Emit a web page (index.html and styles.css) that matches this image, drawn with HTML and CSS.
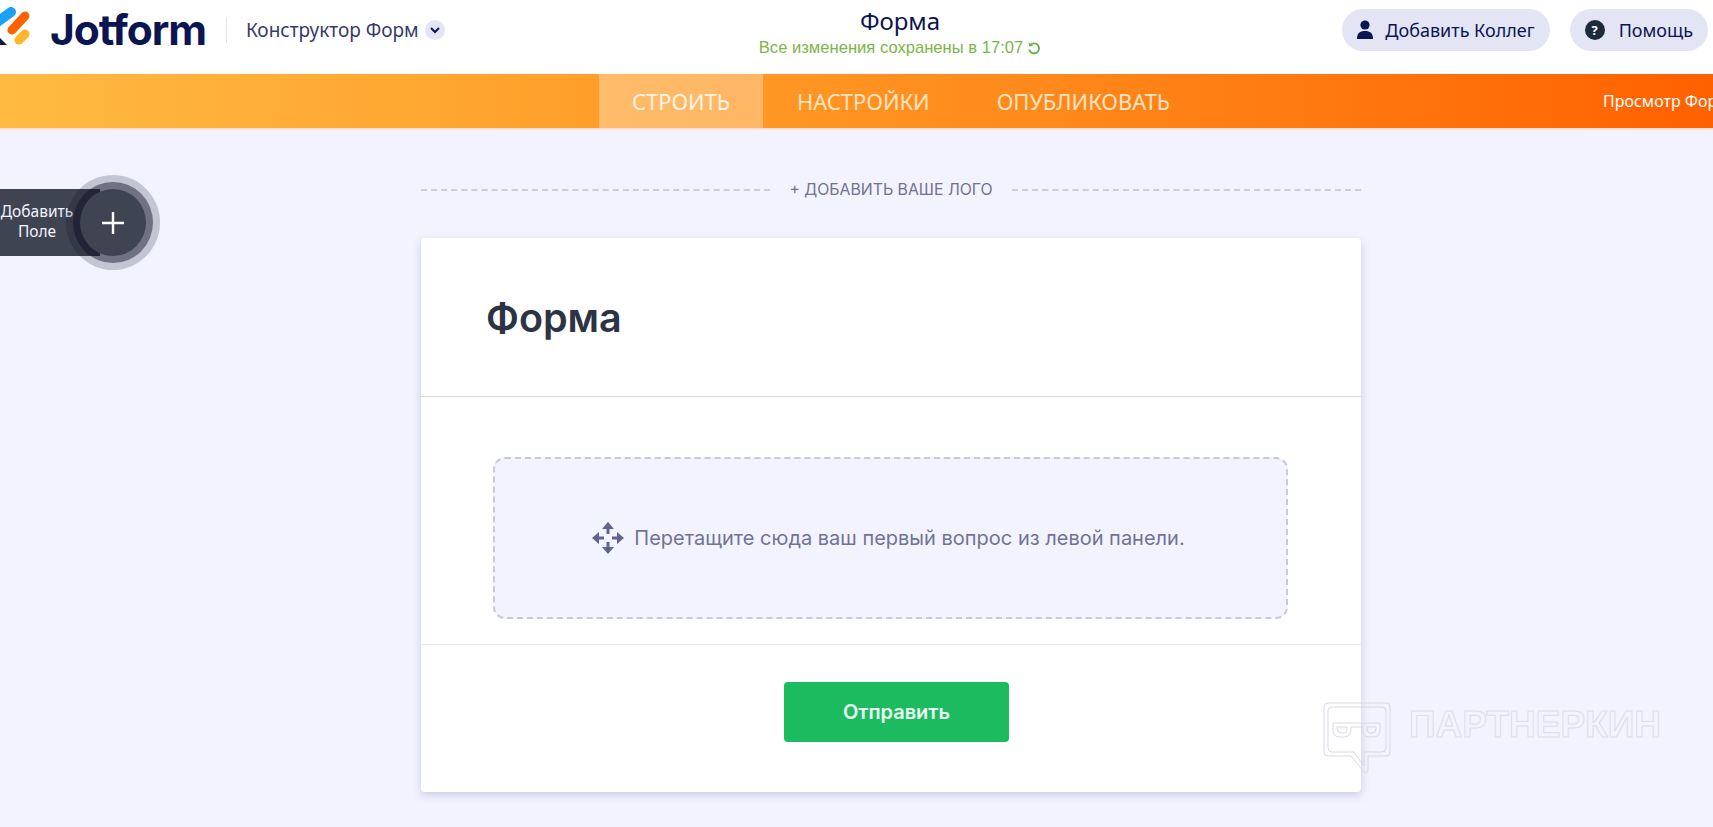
FILE: index.html
```html
<!DOCTYPE html>
<html lang="ru">
<head>
    <meta charset="UTF-8">
    <title>Форма</title>
    <link rel="stylesheet" href="styles.css">
</head>
<body>
    <header class="topbar">
        <div class="brand">
            <svg class="brand-icon" width="50" height="50" viewBox="0 5 50 50">
                <path d="M-4 23 L11 12" stroke="#1aa3f5" stroke-width="10" stroke-linecap="round"/>
                <path d="M12 30 L25 16" stroke="#ff6100" stroke-width="9" stroke-linecap="round"/>
                <path d="M19 40 L25 34" stroke="#ffb629" stroke-width="9" stroke-linecap="round"/>
                <path d="M-1 37 L7 45 L-1 45 Z" fill="#0a1551"/>
            </svg>
            <span class="brand-name">Jotform</span>
            <span class="brand-sep"></span>
            <span class="brand-sub">Конструктор Форм</span>
            <span class="brand-caret">
                <svg width="12" height="12" viewBox="0 0 12 12"><path d="M2 4 L6 8 L10 4" fill="none" stroke="#0a1551" stroke-width="2"/></svg>
            </span>
        </div>
        <div class="doc-title">
            <div class="doc-name">Форма</div>
            <div class="doc-saved">Все изменения сохранены в 17:07
                <svg width="14" height="14" viewBox="0 0 14 14"><path d="M3 4.5 A5 5 0 1 1 2.2 8.5" fill="none" stroke="#64b247" stroke-width="1.8"/><path d="M1.6 1.4 L2.2 5.6 L6.3 4.8 Z" fill="#64b247"/></svg>
            </div>
        </div>
        <div class="top-actions">
            <button class="pill">
                <svg width="18" height="20" viewBox="0 0 18 20"><circle cx="9" cy="5" r="4.6" fill="#0a1551"/><path d="M1 19 C1 13 4 11 9 11 C14 11 17 13 17 19 Z" fill="#0a1551"/></svg>
                Добавить Коллег
            </button>
            <button class="pill pill-help">
                <span class="help-icon">?</span>
                Помощь
            </button>
        </div>
    </header>

    <nav class="navbar">
        <a class="tab tab-active">СТРОИТЬ</a>
        <a class="tab tab-settings">НАСТРОЙКИ</a>
        <a class="tab tab-publish">ОПУБЛИКОВАТЬ</a>
        <span class="preview">Просмотр Формы</span>
    </nav>

    <main class="stage">
        <div class="add-field">
            <div class="add-label">Добавить<br>Поле</div>
            <div class="add-btn">
                <svg width="24" height="24" viewBox="0 0 24 24"><path d="M12 1 V23 M1 12 H23" stroke="#fff" stroke-width="2.4"/></svg>
            </div>
        </div>

        <div class="logo-row">
            <span class="logo-line"></span>
            <span class="logo-text">+ ДОБАВИТЬ ВАШЕ ЛОГО</span>
            <span class="logo-line"></span>
        </div>

        <section class="card">
            <div class="card-head">
                <h1>Форма</h1>
            </div>
            <div class="card-body">
                <div class="dropzone">
                    <svg width="32" height="32" viewBox="0 0 32 32" fill="#5f648c">
                        <path d="M16 0 L22 7 H10 Z"/>
                        <path d="M16 32 L22 25 H10 Z"/>
                        <path d="M0 16 L7 10 V22 Z"/>
                        <path d="M32 16 L25 10 V22 Z"/>
                        <path d="M14.5 6 H17.5 V12 H14.5 Z M14.5 20 H17.5 V26 H14.5 Z M6 14.5 H12 V17.5 H6 Z M20 14.5 H26 V17.5 H20 Z"/>
                    </svg>
                    <span>Перетащите сюда ваш первый вопрос из левой панели.</span>
                </div>
            </div>
            <div class="card-foot">
                <button class="submit">Отправить</button>
            </div>
        </section>
    </main>

    <div class="watermark">
        <svg width="68" height="74" viewBox="0 0 68 74" fill="none" stroke="#d6d6e2" stroke-width="1">
            <path d="M5 1 H63 Q67 1 67 5 V50 Q67 54 63 54 H45 V68 Q44 73 41 70 L28 54 H5 Q1 54 1 50 V5 Q1 1 5 1 Z"/>
            <path d="M9 5 H59 Q63 5 63 9 V46 Q63 50 59 50 H41 V64 L31 50 H9 Q5 50 5 46 V9 Q5 5 9 5 Z"/>
            <path d="M10 21 H57 V28 Q57 35 50 35 H46 Q40 35 40 28 V25 H28 V28 Q28 35 21 35 H17 Q10 35 10 28 Z"/>
            <path d="M14 25 H24 V27 Q24 31 20 31 H18 Q14 31 14 27 Z M44 25 H53 V27 Q53 31 49 31 H47 Q44 31 44 27 Z"/>
        </svg>
        <span class="watermark-text">ПАРТНЕРКИН</span>
    </div>
</body>
</html>
```

FILE: styles.css
```css
*{
    box-sizing: border-box;
}

html,
body{
    margin: 0;
    height: 827px;
    overflow: hidden;
}

body{
    position: relative;
    background-color: #f3f3ff;
    font-family: "Inter", "Liberation Sans", sans-serif;
    color: #0a1551;
}

/* top bar */
.topbar{
    display: flex;
    align-items: center;
    height: 74px;
    padding-bottom: 14px;
    background-color: #fff;
}

.brand{
    display: flex;
    align-items: center;
    flex: 0 0 740px;
    height: 50px;
}
.brand-icon{
    flex: none;
}
.brand-name{
    margin-top: -2px;
    font-size: 42.5px;
    font-weight: 700;
    letter-spacing: -1.1px;
}
.brand-sep{
    width: 1px;
    height: 26px;
    margin: 0 19px 0 20px;
    background-color: #e3e5f0;
}
.brand-sub{
    font-family: "Noto Sans", sans-serif;
    font-size: 19px;
    color: #343c6a;
}
.brand-caret{
    display: flex;
    align-items: center;
    justify-content: center;
    width: 20px;
    height: 20px;
    margin-left: 6px;
    border-radius: 50%;
    background-color: #e3e5f5;
}

.doc-title{
    flex: 0 0 320px;
    margin-top: 2px;
    text-align: center;
}
.doc-name{
    font-family: "Noto Sans", sans-serif;
    font-size: 24px;
    line-height: 32px;
}
.doc-saved{
    display: flex;
    align-items: center;
    justify-content: center;
    gap: 4px;
    margin-top: 1px;
    font-family: "Liberation Sans", sans-serif;
    font-size: 16.6px;
    line-height: 20px;
    color: #7ab648;
}

.top-actions{
    display: flex;
    gap: 20px;
    margin-left: auto;
    padding-right: 5px;
}
.pill{
    display: flex;
    align-items: center;
    gap: 11px;
    height: 42px;
    padding: 0 15px 0 14px;
    border: none;
    border-radius: 21px;
    background-color: #e3e5f5;
    color: #0a1551;
    font-family: "Noto Sans", sans-serif;
    font-size: 18px;
}
.pill-help{
    gap: 14px;
    padding: 0 15px 0 15px;
}
.help-icon{
    display: flex;
    align-items: center;
    justify-content: center;
    width: 20px;
    height: 20px;
    border-radius: 50%;
    background-color: #1c2a3a;
    color: #fff;
    font-size: 13px;
    font-weight: 700;
}

/* orange nav */
.navbar{
    display: flex;
    align-items: stretch;
    height: 54px;
    padding-left: 599px;
    background: linear-gradient(90deg, #ffba42 0%, #ff9b26 40%, #ff8a1c 60%, #ff6100 100%);
    box-shadow: 0 1px 2px rgba(255, 180, 100, 0.5);
    font-family: "Noto Sans", sans-serif;
}
.tab{
    display: flex;
    align-items: center;
    justify-content: center;
    font-size: 21.9px;
    color: #ffe3c2;
}
.tab-active{
    width: 164px;
    background-color: rgba(255, 255, 255, 0.3);
    color: #fff3e2;
}
.tab-settings{
    margin-left: 34px;
}
.tab-publish{
    margin-left: 67px;
}
.preview{
    display: flex;
    align-items: center;
    width: 110px;
    margin-left: auto;
    overflow: hidden;
    white-space: nowrap;
    font-size: 16px;
    color: #fff;
}

/* floating add-field */
.add-field{
    position: absolute;
    left: 0;
    top: 189px;
    width: 146px;
    height: 67px;
}
.add-label{
    width: 100px;
    height: 67px;
    padding: 12px 26px 0 0;
    background-color: #3e4451;
    color: #f3f3fe;
    font-family: "Noto Sans", sans-serif;
    font-size: 15.5px;
    line-height: 20px;
    text-align: center;
}
.add-btn{
    position: absolute;
    left: 80px;
    top: 0;
    display: flex;
    align-items: center;
    justify-content: center;
    width: 66px;
    height: 67px;
    border-radius: 50%;
    background-color: #3e4451;
    box-shadow: 0 0 0 7px rgba(10, 13, 35, 0.45), 0 0 0 14px rgba(10, 13, 35, 0.2);
}

/* form */
.stage{
    width: 940px;
    margin-left: 421px;
}

.logo-row{
    display: flex;
    align-items: center;
    gap: 19px;
    height: 110px;
    padding-top: 13px;
}
.logo-line{
    flex: 1;
    border-top: 2px dashed #cbcce0;
}
.logo-text{
    font-size: 15.8px;
    color: #6f728f;
}

.card{
    height: 554px;
    border-radius: 4px;
    background-color: #fff;
    box-shadow: 0 3px 8px rgba(80, 85, 140, 0.25);
}
.card-head{
    height: 159px;
    padding: 56px 0 0 65px;
    border-bottom: 1px solid #dcdce2;
}
.card-head h1{
    margin: 0;
    font-size: 39.5px;
    font-weight: 600;
    line-height: 48px;
    color: #2c3345;
}
.card-body{
    height: 248px;
    padding: 60px 0 0 72px;
    border-bottom: 1px solid #e6e6ee;
}
.dropzone{
    display: flex;
    align-items: center;
    justify-content: center;
    gap: 10px;
    width: 795px;
    height: 162px;
    padding-right: 4px;
    border: 2px dashed #c9c9de;
    border-radius: 12px;
    background-color: #f3f3ff;
    font-size: 20px;
    color: #6f7396;
}
.card-foot{
    display: flex;
    justify-content: center;
    padding: 37px 0 0 11px;
}
.submit{
    width: 225px;
    height: 60px;
    border: none;
    border-radius: 4px;
    background-color: #1cbb60;
    color: #e9fbf0;
    font-family: "Inter", sans-serif;
    font-size: 20px;
    font-weight: 600;
}

/* watermark over the page */
.watermark{
    position: absolute;
    left: 1323px;
    top: 702px;
    display: flex;
    align-items: flex-start;
    gap: 18px;
    opacity: 0.9;
}
.watermark-text{
    margin-top: 3px;
    font-family: "Liberation Sans", sans-serif;
    font-size: 37px;
    font-weight: 700;
    line-height: 40px;
    color: transparent;
    -webkit-text-stroke: 1px #dcdce8;
}
```
